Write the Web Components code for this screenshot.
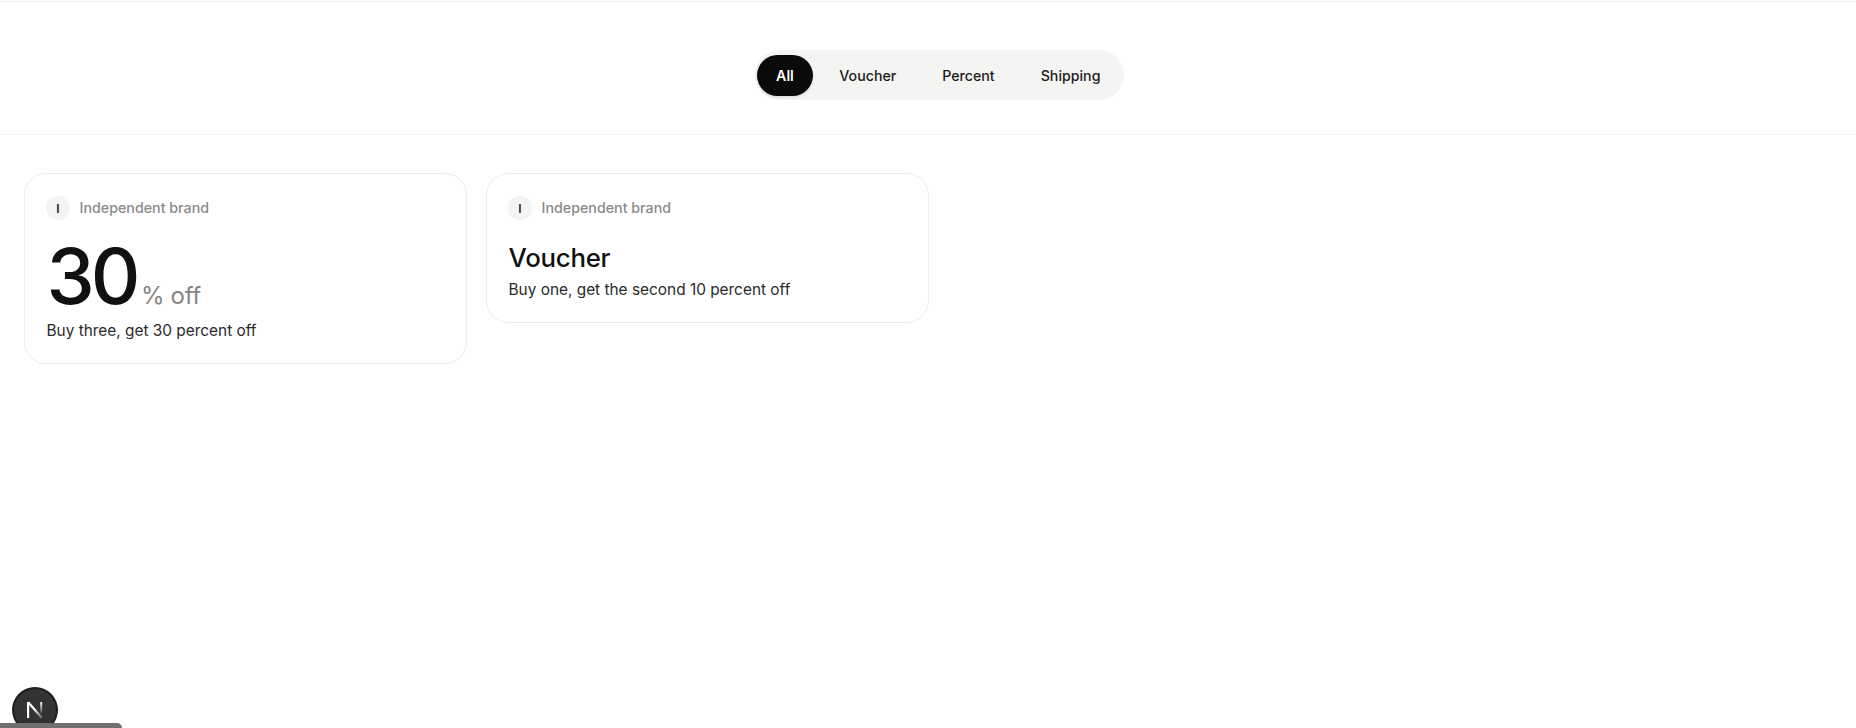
<!DOCTYPE html>
<html><head><meta charset="utf-8"><title>Offers</title>
<style>
html,body{margin:0;padding:0;height:100%;background:#fff;overflow:hidden}
body{font-family:Inter,"Liberation Sans",sans-serif;color:#111;padding-top:1px;box-sizing:border-box}
</style></head>
<body>
<filter-bar>
  <filter-pill active>All</filter-pill>
  <filter-pill>Voucher</filter-pill>
  <filter-pill>Percent</filter-pill>
  <filter-pill>Shipping</filter-pill>
</filter-bar>
<offer-grid>
  <offer-card>
    <big-value value="30" unit="% off"></big-value>
    <span slot="desc">Buy three, get 30 percent off</span>
  </offer-card>
  <offer-card>
    <voucher-title>Voucher</voucher-title>
    <span slot="desc">Buy one, get the second 10 percent off</span>
  </offer-card>
</offer-grid>
<dev-indicator></dev-indicator>
<script>
function def(name, css, html, setup){
  customElements.define(name, class extends HTMLElement{
    constructor(){super();const r=this.attachShadow({mode:'open'});r.innerHTML='<style>'+css+'</style>'+html;}
    connectedCallback(){ if(setup) setup(this); }
  });
}
def('filter-bar',`
  :host{display:flex;justify-content:center;align-items:flex-start;box-sizing:border-box;height:134px;padding:48px 0 0 23px;border-top:1px solid #efefef;border-bottom:1px solid #f1f1f1}
  .track{display:flex;align-items:center;height:50px;box-sizing:border-box;padding:0 1px 0 2px;border-radius:25px;background:#f4f4f2}
`,`<div class="track"><slot></slot></div>`);
def('filter-pill',`
  :host{display:flex;align-items:center;justify-content:center;height:41px;padding:0 23px;border-radius:21px;font-size:14.2px;font-weight:450;color:#1c1c1c}
  :host([active]){background:#0a0a0a;color:#fff;font-weight:600;padding:0 19.5px;margin-right:3px;box-shadow:0 1px 3px rgba(0,0,0,.12)}
`,`<slot></slot>`);
def('offer-grid',`
  :host{display:grid;grid-template-columns:repeat(4,443px);gap:19px;padding:38px 24px 0;align-items:start}
`,`<slot></slot>`);
def('offer-card',`
  :host{display:block;box-sizing:border-box;border:1px solid #ececec;border-radius:22px;padding:22px 21.5px 21px;background:#fff}
  .brand{display:flex;align-items:center;gap:9.5px;height:24px;margin:0 0 21px -.5px}
  .logo{width:24px;height:24px;border-radius:50%;background:#f4f4f2;display:flex;align-items:center;justify-content:center;font-size:12px;font-weight:600;color:#222}
  .name{font-size:14.25px;line-height:22px;margin-bottom:1px;font-weight:500;color:#8a8a8a}
  .desc{font-size:15.4px;line-height:22px;color:#2a2a2a;margin-top:4px}
`,`<div class="brand"><span class="logo">I</span><span class="name">Independent brand</span></div><slot></slot><div class="desc"><slot name="desc"></slot></div>`);
def('big-value',`
  :host{display:flex;align-items:baseline;gap:4.5px;height:75px}
  .v{font-size:77px;letter-spacing:-4px;font-weight:450;color:#111;line-height:70px}
  .u{font-size:24px;letter-spacing:-.35px;color:#858585;line-height:1}
`,`<span class="v"></span><span class="u"></span>`,el=>{
  el.shadowRoot.querySelector('.v').textContent=el.getAttribute('value');
  el.shadowRoot.querySelector('.u').textContent=el.getAttribute('unit');
});
def('voucher-title',`
  :host{display:block;font-size:25.8px;line-height:34px;font-weight:450;color:#111;letter-spacing:-.25px}
`,`<slot></slot>`);
def('dev-indicator',`
  :host{display:block;position:fixed;left:0;top:0;width:0;height:0}
  .c{position:absolute;left:13px;top:688px;width:44px;height:44px;border-radius:50%;background:#333;box-shadow:0 0 0 1px #1c1c1c, inset 0 0 0 1px #1c1c1c;display:flex;align-items:center;justify-content:center}
  .s{position:absolute;left:0;top:723px;width:122px;height:5px;background:#6f6f6f;border-radius:0 5px 0 0}
`,`<div class="c"><svg width="18" height="18" viewBox="0 0 18 18" fill="none"><defs><linearGradient id="g" x1="0" y1="0" x2="0" y2="1"><stop offset="0" stop-color="#fff"/><stop offset="1" stop-color="#fff" stop-opacity=".15"/></linearGradient><linearGradient id="d" gradientUnits="userSpaceOnUse" x1="8" y1="8" x2="16" y2="17"><stop offset="0" stop-color="#fff"/><stop offset="1" stop-color="#fff" stop-opacity=".2"/></linearGradient></defs><rect x="1" y="1" width="2.2" height="16" fill="#fff"/><path d="M2.2 1.2 16 17" stroke="url(#d)" stroke-width="2.2"/><rect x="14.2" y="1" width="2" height="11" fill="url(#g)"/></svg></div><div class="s"></div>`);
</script>
</body></html>
